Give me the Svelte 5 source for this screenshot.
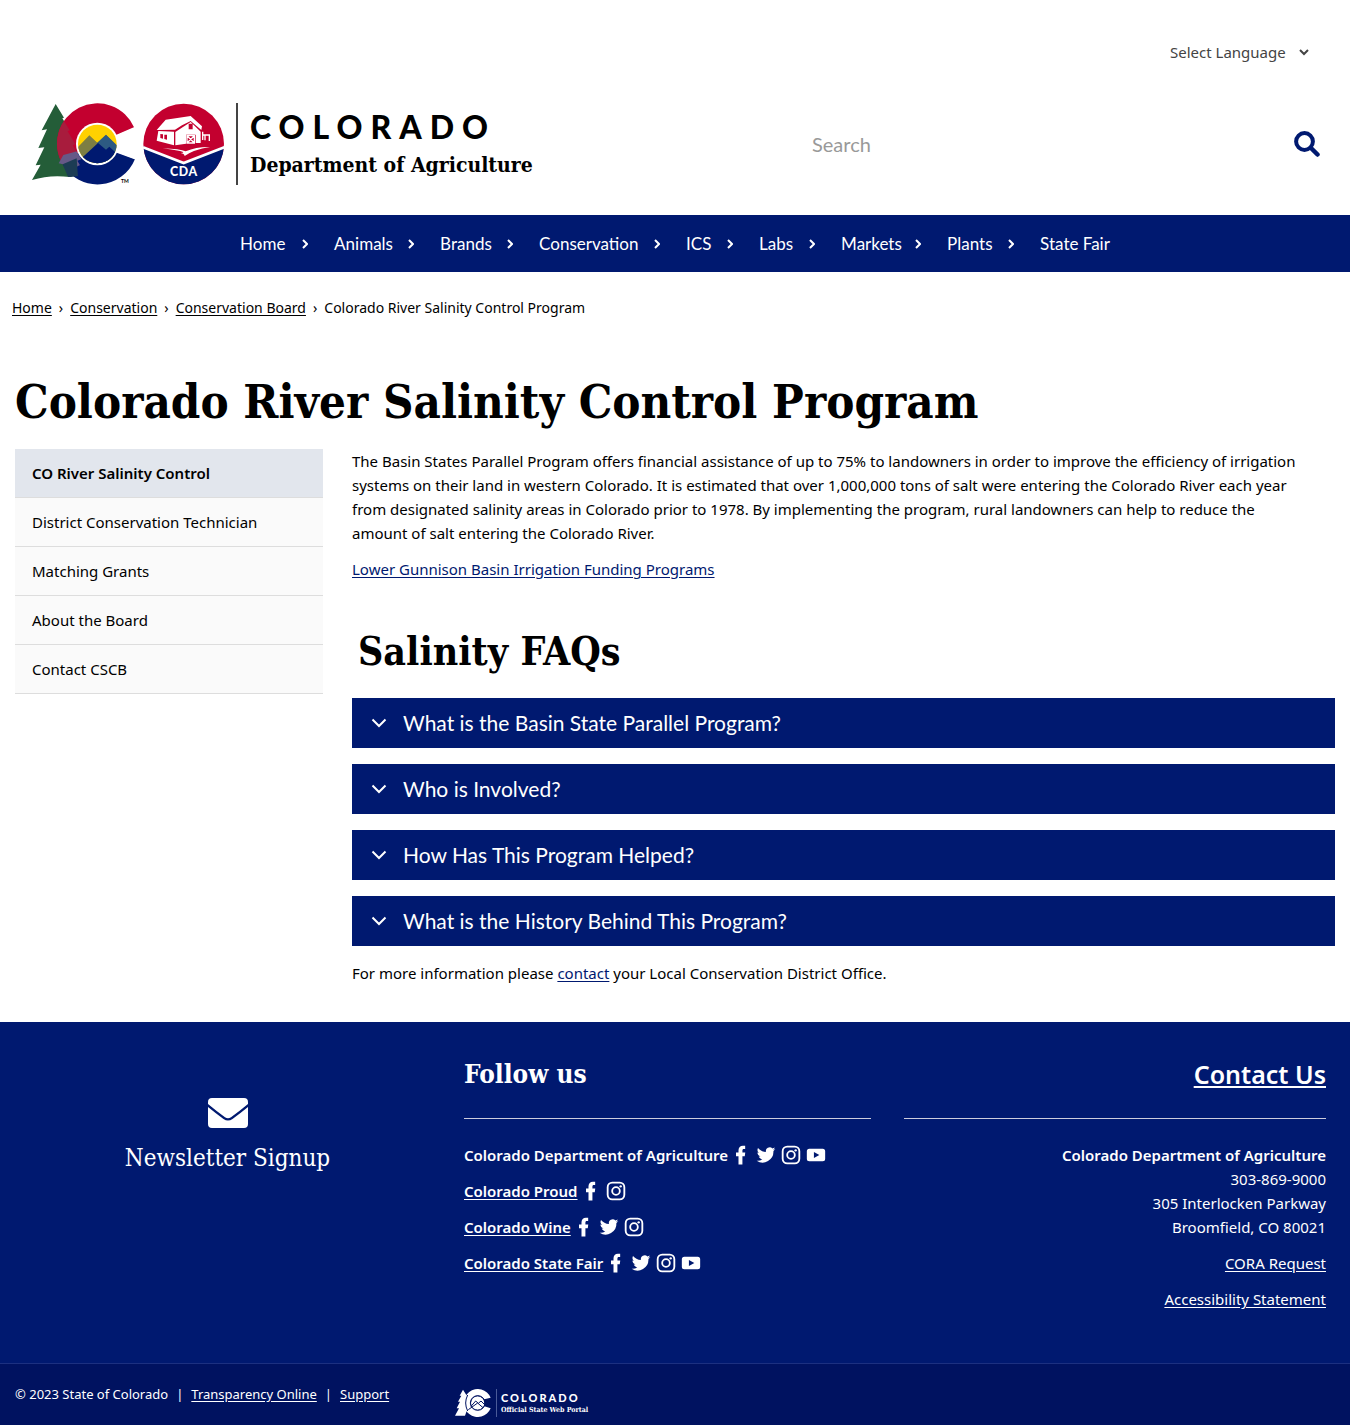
<script>
  const navItems = [
    { label: 'Home', menu: true },
    { label: 'Animals', menu: true },
    { label: 'Brands', menu: true },
    { label: 'Conservation', menu: true },
    { label: 'ICS', menu: true },
    { label: 'Labs', menu: true },
    { label: 'Markets', menu: true },
    { label: 'Plants', menu: true },
    { label: 'State Fair', menu: false }
  ];
  const crumbs = ['Home', 'Conservation', 'Conservation Board'];
  const sideItems = [
    'CO River Salinity Control',
    'District Conservation Technician',
    'Matching Grants',
    'About the Board',
    'Contact CSCB'
  ];
  const faqs = [
    'What is the Basin State Parallel Program?',
    'Who is Involved?',
    'How Has This Program Helped?',
    'What is the History Behind This Program?'
  ];
  const social = [
    { name: 'Colorado Department of Agriculture', link: false, icons: ['facebook', 'twitter', 'instagram', 'youtube'] },
    { name: 'Colorado Proud', link: true, icons: ['facebook', 'instagram'] },
    { name: 'Colorado Wine', link: true, icons: ['facebook', 'twitter', 'instagram'] },
    { name: 'Colorado State Fair', link: true, icons: ['facebook', 'twitter', 'instagram', 'youtube'] }
  ];
</script>

{#snippet socialIcon(kind)}
  <svg viewBox="0 0 24 24" width="20" height="20" aria-hidden="true">
    {#if kind === 'facebook'}
      <path fill="currentColor" d="M9 23.500V13.500H6V9h3V6.200C9 2.900 11 .8 14.300 .8c1.400 0 2.700.2 2.700.2v3.900h-1.600c-1.300 0-1.700.8-1.700 1.700V9h3.400l-.6 4.500h-2.800v10z" />
    {:else if kind === 'twitter'}
      <path fill="currentColor" d="M23.200 4.900c-.8.400-1.700.6-2.600.7.900-.6 1.600-1.400 2-2.500-.9.500-1.900.9-2.900 1.100a4.600 4.600 0 0 0-7.800 4.200C8.100 8.200 4.700 6.400 2.400 3.600c-1.200 2.100-.6 4.800 1.400 6.100-.7 0-1.400-.2-2.100-.6 0 2.200 1.500 4.200 3.700 4.600-.7.200-1.400.2-2.100.1.600 1.800 2.300 3.100 4.300 3.200A9.200 9.200 0 0 1 .8 18.900 13 13 0 0 0 20.900 7.300c.9-.7 1.700-1.500 2.300-2.400z" />
    {:else if kind === 'instagram'}
      <rect x="2" y="2" width="20" height="20" rx="5.500" fill="none" stroke="currentColor" stroke-width="2.200" />
      <circle cx="12" cy="12" r="4.600" fill="none" stroke="currentColor" stroke-width="2.200" />
      <circle cx="17.600" cy="6.400" r="1.400" fill="currentColor" />
    {:else}
      <path fill="currentColor" fill-rule="evenodd" d="M4 4.500h16q3 0 3 3v9q0 3-3 3H4q-3 0-3-3v-9q0-3 3-3zM9.500 8.300v7.400L16 12z" />
    {/if}
  </svg>
{/snippet}

<header>
  <div class="language">
    <select aria-label="Select Language">
      <option>Select Language</option>
    </select>
    <svg viewBox="0 0 12 12" width="12" height="12" aria-hidden="true">
      <path d="M2 4l4 4 4-4" fill="none" stroke="#444" stroke-width="2" />
    </svg>
  </div>
  <div class="brandrow">
    <a class="brand" href="#home">
      <svg class="mark" viewBox="30 24 585 246" width="195" height="82" aria-hidden="true">
        <defs>
          <clipPath id="tree">
            <path d="M107 27L132 68 127 70 149 106 143 109 166 148 158 151 184 193 172 197 198 241 150 246Q90 238 36 255L62 209 47 211 73 157 55 159 81 103 65 106Z" />
          </clipPath>
          <clipPath id="sun"><circle cx="232" cy="147" r="58" /></clipPath>
        </defs>
        <path fill="#245d38" d="M107 27L132 68 127 70 149 106 143 109 166 148 158 151 184 193 172 197 170 241 150 246Q90 238 36 255L62 209 47 211 73 157 55 159 81 103 65 106Z" />
        <path fill="#c3002f" d="M343 98A121 121 0 1 0 128 208L185 165 232 147 290 121Z" />
        <path fill="#001970" d="M345 192A121 121 0 0 1 128 208L187 165 232 147 290 171Z" />
        <g clip-path="url(#tree)">
          <path fill="#a81c3d" d="M343 98A121 121 0 1 0 128 208L185 165 232 147Z" />
          <path fill="#665987" d="M116 205L130 180 185 165 200 200 170 215 128 208Z" />
          <path fill="#1c3c54" d="M128 208L170 190 175 260H150Z" />
        </g>
        <circle cx="232" cy="147" r="64" fill="#fff" />
        <path fill="#fff" d="M286 121L350 93V195L290 173Z" />
        <g clip-path="url(#sun)">
          <rect x="170" y="85" width="125" height="125" fill="#ffd100" />
          <path fill="#7d7e43" d="M165 165L208 121 232 143 258 119 300 160V220H165Z" />
          <path fill="#2d5a82" d="M232 143L258 119 300 160V220H220Z" />
          <path fill="#001970" d="M165 205L195 180 234 144 258 164 268 155 300 185V220H165Z" />
        </g>
        <text x="303" y="265" font-size="15" font-weight="700">TM</text>
        <circle cx="491" cy="147" r="121" fill="#c3002f" />
        <path fill="#001970" d="M370.200 154L491 202 611.800 154A121 121 0 0 1 370.200 154Z" />
        <path d="M369 157L491 204 613 157" fill="none" stroke="#fff" stroke-width="8" />
        <path fill="#fff" d="M410 105L437 74 512 63 546 94 544 105 512 78 486 91 465 104Z" />
        <path fill="#fff" fill-rule="evenodd" d="M415 108L462 110V151L410 137ZM421 117V129L429 131V118ZM433 119V132L441 134V119Z" />
        <path fill="#fff" fill-rule="evenodd" d="M466 111L512 81 542 110V144H527V119H498V146L466 151ZM506 86V103H518V86Z" />
        <path d="M501 122h22v22h-22zM501 122l22 22M523 122l-22 22M548 110v25M548 120h22M555 118v18M568 118v20" fill="none" stroke="#fff" stroke-width="4" />
        <path fill="#fff" d="M428 160Q480 162 497 169 530 155 570 156 520 164 494 183 493 176 482 174 499 173 480 168 455 164 428 160Z" />
        <text class="cda" x="492" y="244" text-anchor="middle" font-size="37" fill="#fff">CDA</text>
      </svg>
      <span class="wordmark">
        <span class="state">COLORADO</span>
        <span class="dept">Department of Agriculture</span>
      </span>
    </a>
    <form class="search">
      <input type="search" placeholder="Search" aria-label="Search" />
      <button type="button" aria-label="Submit search">
        <svg viewBox="0 0 26 26" width="26" height="26" aria-hidden="true">
          <circle cx="10.500" cy="10.500" r="8.400" fill="none" stroke="#001970" stroke-width="4" />
          <path d="M17 17l6.500 6.500" stroke="#001970" stroke-width="4.500" stroke-linecap="round" />
        </svg>
      </button>
    </form>
  </div>
</header>

<nav class="main" aria-label="Main">
  {#each navItems as item}
    <div class="item">
      <a href="#{item.label}">{item.label}</a>
      {#if item.menu}
        <svg viewBox="0 0 6 10" width="6" height="10" aria-hidden="true">
          <path d="M1 1l4 4-4 4" fill="none" stroke="#fff" stroke-width="2" />
        </svg>
      {/if}
    </div>
  {/each}
</nav>

<nav class="crumbs" aria-label="Breadcrumb">
  {#each crumbs as crumb}
    <a href="#{crumb}">{crumb}</a><span>›</span>
  {/each}
  <b>Colorado River Salinity Control Program</b>
</nav>

<h1>Colorado River Salinity Control Program</h1>

<div class="layout">
  <aside>
    {#each sideItems as item, i}
      <a href="#{item}" class:active={i === 0}>{item}</a>
    {/each}
  </aside>
  <main>
    <p class="intro">
      The Basin States Parallel Program offers financial assistance of up to 75% to landowners in order to improve the efficiency of irrigation systems on their land in western Colorado. It is estimated that over 1,000,000 tons of salt were entering the Colorado River each year from designated salinity areas in Colorado prior to 1978. By implementing the program, rural landowners can help to reduce the amount of salt entering the Colorado River.
    </p>
    <p><a href="#funding">Lower Gunnison Basin Irrigation Funding Programs</a></p>
    <h2>Salinity FAQs</h2>
    <div class="faqs">
      {#each faqs as q}
        <button type="button" aria-expanded="false">
          <svg viewBox="0 0 16 16" width="16" height="16" aria-hidden="true">
            <path d="M1.500 4.500l6.500 6.500 6.500-6.500" fill="none" stroke="#fff" stroke-width="2" />
          </svg>
          {q}
        </button>
      {/each}
    </div>
    <p>For more information please <a href="#contact">contact</a> your Local Conservation District Office.</p>
  </main>
</div>

<footer>
  <div class="columns">
    <a class="newsletter" href="#newsletter">
      <svg viewBox="0 0 40 30" width="40" height="30" aria-hidden="true">
        <path fill="#fff" d="M4 0H36Q40 0 40 4V6Q31 13.500 23 19.300 20 21.300 17 19.300 9 13.500 0 6V4Q0 0 4 0zM0 9Q8 15.500 15.500 21 20 24 24.500 21 32 15.500 40 9V26Q40 30 36 30H4Q0 30 0 26z" />
      </svg>
      <span>Newsletter Signup</span>
    </a>
    <section class="follow">
      <h3>Follow us</h3>
      <hr />
      {#each social as row}
        <div class="row">
          {#if row.link}<a href="#{row.name}">{row.name}</a>{:else}<span>{row.name}</span>{/if}
          <span class="icons">
            {#each row.icons as kind}
              <a href="#{kind}" aria-label="{row.name} on {kind}">{@render socialIcon(kind)}</a>
            {/each}
          </span>
        </div>
      {/each}
    </section>
    <section class="contact">
      <h3><a href="#contact-us">Contact Us</a></h3>
      <hr />
      <address>
        <strong>Colorado Department of Agriculture</strong><br />
        303-869-9000<br />
        305 Interlocken Parkway<br />
        Broomfield, CO 80021
      </address>
      <p><a href="#cora">CORA Request</a></p>
      <p><a href="#accessibility">Accessibility Statement</a></p>
    </section>
  </div>
  <div class="legal">
    <div class="links">
      <span>© 2023 State of Colorado</span><span>|</span><a href="#transparency">Transparency Online</a><span>|</span><a href="#support">Support</a>
    </div>
    <a class="portal" href="#portal">
      <svg viewBox="0 0 108 84" width="36" height="28" aria-hidden="true">
        <path fill="#fff" d="M24 2L34 18 30 36 38 58 30 80H0L12 58H5L15 38H9L19 20H14Z" />
        <path fill="#fff" d="M107 26A42 42 0 1 0 107 58L88 52A22 22 0 1 1 88 31Z" />
        <circle cx="68" cy="42" r="20" fill="#fff" />
        <circle cx="68" cy="42" r="22" fill="none" stroke="#001260" stroke-width="3" />
        <path d="M38 18Q26 42 38 66M48 52L62 36 70 43 78 36 88 46M40 62L68 42 84 56" fill="none" stroke="#001260" stroke-width="3" />
      </svg>
      <span class="portaltext">
        <span class="pstate">COLORADO</span>
        <span class="pline">Official State Web Portal</span>
      </span>
    </a>
  </div>
</footer>

<style>
  :global(body) {
    margin: 0;
    background: #fff;
    color: #000;
    font: 15px/24px 'Noto Sans', 'Open Sans', sans-serif;
  }
  :global(*) { box-sizing: border-box; }
  a { color: inherit; text-underline-offset: 2px; }
  p { margin: 0 0 12px; }
  button { font: inherit; border: 0; cursor: pointer; }

  header { padding: 36px 30px 30px; }
  .language { display: flex; justify-content: flex-end; align-items: center; gap: 12px; padding-right: 10px; height: 32px; }
  select { appearance: none; border: 0; background: none; padding: 0; font: inherit; color: #444; }
  .brandrow { display: flex; justify-content: space-between; align-items: center; margin-top: 35px; }
  .brand { display: flex; gap: 11px; color: #000; text-decoration: none; }
  .mark { display: block; font-family: Lato, sans-serif; }
  .cda { font-weight: 900; letter-spacing: 2px; }
  .wordmark { display: flex; flex-direction: column; border-left: 2px solid #444; padding: 4px 0 0 12px; }
  .state { font-family: Lato, sans-serif; font-size: 32px; line-height: 40px; font-weight: 900; letter-spacing: 8px; }
  .dept { font: bold 21px/36px 'DejaVu Serif Condensed', 'DejaVu Serif', serif; white-space: nowrap; }
  .search { display: flex; align-items: center; width: 508px; }
  .search input { flex: 1; min-width: 0; border: 0; outline: 0; padding: 0; background: none; font: 20px/24px Lato, sans-serif; color: #444; }
  .search input::placeholder { color: #999; opacity: 1; }
  .search button { background: none; padding: 0; }
  .search svg { display: block; }

  nav.main { display: grid; grid-template-columns: 94px 106px 99px 147px 73px 82px 106px 93px auto; justify-content: center; align-items: center; height: 57px; background: #001970; color: #fff; font-family: Lato, sans-serif; font-size: 17px; }
  .item { display: flex; align-items: center; justify-content: space-between; padding-right: 26px; }
  .item:last-child { padding: 0; }
  .item a { text-decoration: none; white-space: nowrap; }

  .crumbs { display: flex; gap: 7px; padding: 24px 12px; font-size: 14px; }
  .crumbs b { font-weight: 400; }

  h1, h2, h3 { margin: 0; font-family: 'DejaVu Serif Condensed', 'DejaVu Serif', serif; font-weight: 700; }
  h1 { padding: 30px 15px 18px; font-size: 47px; line-height: 56px; }
  .layout { display: grid; grid-template-columns: 308px 1fr; gap: 29px; align-items: start; padding: 1px 15px 37px; }
  aside a { display: block; height: 49px; padding: 12px 17px; background: #fafafa; border-bottom: 1px solid #ddd; text-decoration: none; }
  aside .active { background: #e2e6ed; font-weight: 600; }
  main a { color: #001970; }
  main p { margin: 0 0 12px; }
  .intro { padding-right: 28px; }
  h2 { padding: 34px 6px 23px; font-size: 39px; line-height: 48px; }
  .faqs { display: grid; gap: 16px; margin-bottom: 15px; }
  .faqs button { display: flex; align-items: center; gap: 16px; height: 50px; padding: 0 19px; background: #001970; color: #fff; font-family: Lato, sans-serif; font-size: 21px; text-align: left; }
  main > p:last-child { margin: 0; }

  footer { background: #001970; color: #fff; }
  .columns { display: grid; grid-template-columns: 407px 407px 1fr; column-gap: 33px; padding: 36px 24px 39px; }
  .newsletter { display: flex; flex-direction: column; align-items: center; gap: 12px; padding-top: 40px; text-decoration: none; font: 24px/36px 'DejaVu Serif Condensed', 'DejaVu Serif', serif; }
  h3 { font-size: 26px; line-height: 32px; }
  hr { margin: 28px 0 24px; border: 0; border-top: 1px solid #ccd; }
  .row { display: flex; align-items: center; gap: 3px; height: 24px; margin-bottom: 12px; font-weight: 600; }
  .icons { display: flex; gap: 5px; }
  .icons a, .icons svg { display: block; }
  .contact { text-align: right; }
  .contact h3 { font-family: 'Noto Sans', sans-serif; font-size: 25px; font-weight: 600; }
  address { margin-bottom: 12px; font-style: normal; }
  strong { font-weight: 600; }
  .contact p:last-child { margin-bottom: 13px; }
  .legal { display: flex; min-height: 62px; padding: 18px 15px 0; border-top: 1px solid #1c3080; background: #001260; font-size: 13px; }
  .links { display: flex; gap: 8px; width: 440px; }
  .portal { display: flex; align-items: center; gap: 5px; height: 28px; margin-top: 7px; text-decoration: none; }
  .portaltext { display: flex; flex-direction: column; justify-content: center; height: 28px; padding-left: 4px; border-left: 1px solid #4a5a98; }
  .pstate { font-family: Lato, sans-serif; font-size: 11px; line-height: 14px; font-weight: 900; letter-spacing: 2px; }
  .pline { font: bold 7px/10px 'DejaVu Serif Condensed', 'DejaVu Serif', serif; }
</style>
